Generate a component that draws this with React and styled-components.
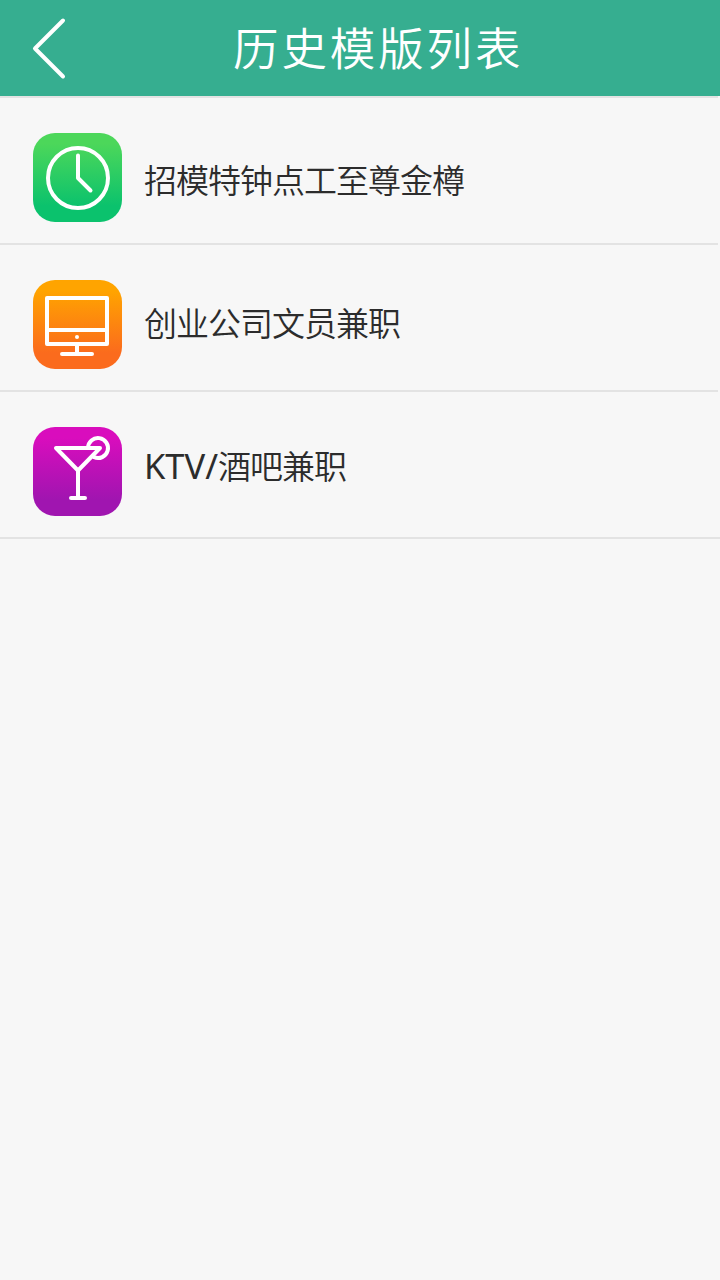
import React from "react";
import styled, { createGlobalStyle } from "styled-components";

const GlobalStyle = createGlobalStyle`
  * { box-sizing: border-box; }
  body {
    margin: 0;
    background: #f7f7f7;
    font-family: "Noto Sans", "Noto Sans CJK SC", sans-serif;
  }
`;

const Page = styled.div`
  min-height: 1280px;
  background: #f7f7f7;
`;

const Header = styled.header`
  display: flex;
  align-items: center;
  height: 96px;
  background: #36ae90;
`;

const BackButton = styled.button`
  display: flex;
  width: 96px;
  height: 96px;
  padding: 0;
  border: 0;
  background: none;
`;

const Title = styled.h1`
  flex: 1;
  margin: 0 0 0 137px;
  color: #fff;
  font-size: 45.5px;
  font-weight: 350;
  line-height: 96px;
  letter-spacing: 2.9px;
  white-space: nowrap;
`;

const Divider = styled.div`
  width: ${({ $full }) => ($full ? "720px" : "718px")};
  height: 2px;
  background: #e3e3e3;
`;

const List = styled.ul`
  margin: 0;
  padding: 0;
  list-style: none;
`;

const Row = styled.li`
  display: flex;
  align-items: center;
  height: 145px;
  padding: 14px 33px 0;
`;

const Tile = styled.div`
  flex: none;
  width: 89px;
  height: 89px;
  border-radius: 22px;
  background: linear-gradient(${({ $from, $to }) => `${$from} 12%, ${$to} 82%`});

  svg { display: block; }
`;

const Label = styled.span`
  margin: 0 0 ${({ $raise }) => $raise * 2}px 22px;
  color: #2c2c2c;
  font-size: 33px;
  font-weight: 350;
  line-height: 48px;
  letter-spacing: -1px;
  white-space: nowrap;
`;

const Latin = styled.span`
  font-size: 34.5px;
  font-weight: 400;
  letter-spacing: 0;
`;

const Glyph = ({ children }) => (
  <svg width="89" height="89" viewBox="0 0 89 89" fill="none" stroke="#fff"
    strokeWidth="4" strokeLinecap="round" strokeLinejoin="round">
    {children}
  </svg>
);

const ClockIcon = () => (
  <Glyph>
    <circle cx="45" cy="45" r="30" />
    <path d="M45 22.5V45L57.5 57.5" />
  </Glyph>
);

const MonitorIcon = () => (
  <Glyph>
    <path d="M14 18H74V64H14ZM14 50H74M44 64V74M29 74H59" />
    <circle cx="44" cy="57" r="2" fill="#fff" stroke="none" />
  </Glyph>
);

const CocktailIcon = () => (
  <Glyph>
    <path d="M45 71V43.5L23 21H67L45 43.5M38 71H52" />
    <path d="M55 21A10 10 0 1 1 61 30.2" />
  </Glyph>
);

const templates = [
  { name: "招模特钟点工至尊金樽", Icon: ClockIcon, from: "#4cd75a", to: "#0bc26d", raise: -3 },
  { name: "创业公司文员兼职", Icon: MonitorIcon, from: "#ffa400", to: "#fb6b1d", raise: 1 },
  { latin: "KTV/", name: "酒吧兼职", Icon: CocktailIcon, from: "#d90dbd", to: "#a015b0", raise: 5 },
];

export default function App() {
  return (
    <Page>
      <GlobalStyle />
      <Header>
        <BackButton aria-label="返回">
          <svg width="96" height="96" fill="none" stroke="#fff" strokeWidth="4"
            strokeLinecap="round" strokeLinejoin="round">
            <path d="M63 20.5L35 48.5L63 76.5" />
          </svg>
        </BackButton>
        <Title>历史模版列表</Title>
      </Header>
      <Divider />
      <List>
        {templates.map(({ latin, name, Icon, from, to, raise }, i) => (
          <React.Fragment key={name}>
            <Row>
              <Tile $from={from} $to={to}><Icon /></Tile>
              <Label $raise={raise}>{latin && <Latin>{latin}</Latin>}{name}</Label>
            </Row>
            <Divider as="li" $full={i === templates.length - 1} />
          </React.Fragment>
        ))}
      </List>
    </Page>
  );
}
